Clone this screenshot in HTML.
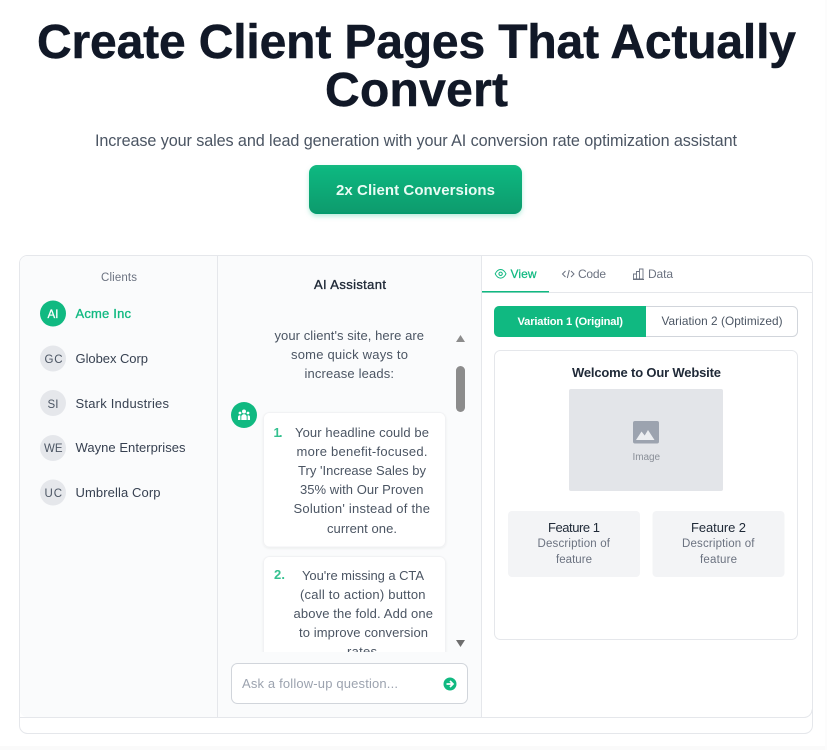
<!DOCTYPE html>
<html lang="en">
<head>
<meta charset="utf-8">
<title>Create Client Pages That Actually Convert</title>
<style>
html,body{margin:0;padding:0;background:#fff;width:827px;height:750px;overflow:hidden}
svg{display:block;position:absolute;left:0;top:0}
text{font-family:"Liberation Sans",Arial,sans-serif}
</style>
</head>
<body>
<svg width="827" height="750" viewBox="0 0 827 750" xmlns="http://www.w3.org/2000/svg">
<defs>
<linearGradient id="btn" x1="0" y1="0" x2="0" y2="1"><stop offset="0" stop-color="#12b981"/><stop offset="1" stop-color="#069a6c"/></linearGradient>
<filter id="sh" x="-20%" y="-30%" width="140%" height="170%"><feDropShadow dx="0" dy="2.5" stdDeviation="2.5" flood-color="#10b981" flood-opacity=".28"/></filter>
<filter id="cs" x="-5%" y="-5%" width="110%" height="110%"><feDropShadow dx="0" dy="1" stdDeviation="1" flood-color="#000" flood-opacity=".06"/></filter>
<clipPath id="chat"><rect x="225" y="320" width="250" height="332"/></clipPath>
<clipPath id="panel"><rect x="20" y="256" width="792" height="461" rx="7"/></clipPath>
</defs>

<!-- faint page edge -->
<rect x="0" y="746" width="827" height="4" fill="#fafafa"/>
<rect x="825" y="0" width="2" height="750" fill="#fcfcfc"/>

<!-- hero -->
<g font-weight="700" font-size="48" fill="#111827" stroke="#111827" stroke-width=".5">
<text x="37" y="58" textLength="759" lengthAdjust="spacing">Create Client Pages That Actually</text>
<text x="325" y="106" textLength="183" lengthAdjust="spacing">Convert</text>
</g>
<text x="95" y="146" font-size="16.2" fill="#4b5563" textLength="642" lengthAdjust="spacing">Increase your sales and lead generation with your AI conversion rate optimization assistant</text>
<rect x="309" y="165" width="213" height="49" rx="8" fill="url(#btn)" filter="url(#sh)"/>
<text x="336" y="195" font-size="15" font-weight="700" fill="#e9fbf4" textLength="159" lengthAdjust="spacing">2x Client Conversions</text>

<!-- panel frame -->
<rect x="19.5" y="255.5" width="793" height="478" rx="8" fill="#fff" stroke="#e5e7eb"/>
<g clip-path="url(#panel)">
<rect x="20" y="256" width="198" height="461" fill="#fafbfc"/>
<rect x="218" y="256" width="264" height="461" fill="#fafbfc"/>
<rect x="217" y="256" width="1" height="461" fill="#e5e7eb"/>
<rect x="481" y="256" width="1" height="461" fill="#e5e7eb"/>
</g>
<path d="M20 717.5H804a8 8 0 0 0 8-8" fill="none" stroke="#e5e7eb"/>

<!-- clients -->
<text x="101" y="281" font-size="11.5" fill="#6b7280" textLength="36" lengthAdjust="spacing">Clients</text>
<circle cx="53" cy="313.5" r="13" fill="#10b981"/>
<circle cx="53" cy="358.5" r="13" fill="#e5e7eb"/>
<circle cx="53" cy="403" r="13" fill="#e5e7eb"/>
<circle cx="53" cy="448" r="13" fill="#e5e7eb"/>
<circle cx="53" cy="492.5" r="13" fill="#e5e7eb"/>
<g font-size="11.5" fill="#4b5563">
<text x="47.5" y="318" fill="#fff" stroke="#fff" stroke-width=".3" textLength="11" lengthAdjust="spacing">AI</text>
<text x="44.5" y="363" textLength="18" lengthAdjust="spacing">GC</text>
<text x="47.5" y="408" textLength="11" lengthAdjust="spacing">SI</text>
<text x="44" y="452" textLength="18.5" lengthAdjust="spacing">WE</text>
<text x="44.5" y="497" textLength="17.5" lengthAdjust="spacing">UC</text>
</g>
<g font-size="13" fill="#374151">
<text x="75.5" y="318" fill="#10b981" stroke="#10b981" stroke-width=".3" textLength="55.5" lengthAdjust="spacing">Acme Inc</text>
<text x="75.5" y="363" textLength="72.5" lengthAdjust="spacing">Globex Corp</text>
<text x="75.5" y="408" textLength="93.5" lengthAdjust="spacing">Stark Industries</text>
<text x="75.5" y="452" textLength="110" lengthAdjust="spacing">Wayne Enterprises</text>
<text x="75.5" y="497" textLength="85" lengthAdjust="spacing">Umbrella Corp</text>
</g>

<!-- chat -->
<text x="314" y="289" font-size="13" fill="#1f2937" stroke="#1f2937" stroke-width=".35" textLength="72" lengthAdjust="spacing">AI Assistant</text>
<g clip-path="url(#chat)">
<g font-size="13" fill="#4b5563">
<text x="274.5" y="340" textLength="149.5" lengthAdjust="spacing">your client's site, here are</text>
<text x="291" y="359" textLength="117" lengthAdjust="spacing">some quick ways to</text>
<text x="304.5" y="378" textLength="89.5" lengthAdjust="spacing">increase leads:</text>
</g>
<rect x="263.5" y="412.5" width="182" height="134.5" rx="6" fill="#fff" stroke="#f1f2f4" filter="url(#cs)"/>
<rect x="263.5" y="556.5" width="182" height="130" rx="6" fill="#fff" stroke="#f1f2f4" filter="url(#cs)"/>
<g font-size="13" fill="#4b5563">
<text x="273.5" y="437" font-size="12.5" fill="#34c08f" font-weight="700" textLength="9" lengthAdjust="spacing">1.</text>
<text x="295" y="437" textLength="134" lengthAdjust="spacing">Your headline could be</text>
<text x="296.5" y="456" textLength="131" lengthAdjust="spacing">more benefit-focused.</text>
<text x="298" y="475" textLength="128" lengthAdjust="spacing">Try 'Increase Sales by</text>
<text x="300" y="494" textLength="123.5" lengthAdjust="spacing">35% with Our Proven</text>
<text x="293.5" y="513" textLength="136.5" lengthAdjust="spacing">Solution' instead of the</text>
<text x="327" y="533" textLength="70" lengthAdjust="spacing">current one.</text>
<text x="274" y="579" fill="#34c08f" font-weight="700" textLength="11" lengthAdjust="spacing">2.</text>
<text x="302" y="580" textLength="122" lengthAdjust="spacing">You're missing a CTA</text>
<text x="300" y="599" textLength="125.5" lengthAdjust="spacing">(call to action) button</text>
<text x="293.5" y="618" textLength="139.5" lengthAdjust="spacing">above the fold. Add one</text>
<text x="299" y="637" textLength="129" lengthAdjust="spacing">to improve conversion</text>
<text x="347" y="656" textLength="30" lengthAdjust="spacing">rates</text>
</g>
</g>
<circle cx="244" cy="415" r="13" fill="#10b981"/>
<g fill="#fff">
<circle cx="244" cy="411.5" r="2"/><circle cx="240" cy="413" r="1.4"/><circle cx="248" cy="413" r="1.4"/>
<path d="M241.3 420v-3.2a2.7 2.7 0 0 1 5.4 0V420z"/>
<path d="M238 420v-2.8a2 2 0 0 1 2-2l.4.4v4.4z"/>
<path d="M250 420v-2.8a2 2 0 0 0-2-2l-.4.4v4.4z"/>
</g>
<!-- scrollbar -->
<path d="M460.5 335l4.5 7h-9z" fill="#8c8c8c"/>
<rect x="456" y="366" width="9" height="46" rx="4.5" fill="#8c8c8c"/>
<path d="M456 640h9l-4.5 7z" fill="#6e6e6e"/>
<!-- input -->
<rect x="231.5" y="663.5" width="236" height="40" rx="6" fill="#fff" stroke="#d1d5db"/>
<text x="242" y="688" font-size="13" fill="#9ca3af" textLength="156" lengthAdjust="spacing">Ask a follow-up question...</text>
<circle cx="450" cy="684" r="6.5" fill="#10b981"/>
<path d="M446.5 684h6M450 681l3 3-3 3" fill="none" stroke="#fff" stroke-width="1.7"/>

<!-- tabs -->
<rect x="482" y="292" width="330" height="1" fill="#e5e7eb"/>
<rect x="482" y="291" width="67" height="1.5" fill="#10b981"/>
<g fill="none" stroke="#10b981" stroke-width="1">
<path d="M495.2 273.8c1.5-3 3.5-4.3 5.4-4.3s3.9 1.3 5.400 4.300c-1.500 3-3.500 4.300-5.400 4.300s-3.900-1.300-5.400-4.300z"/>
<circle cx="500.6" cy="273.800" r="1.700"/>
</g>
<text x="510.5" y="278" font-size="12" fill="#10b981" stroke="#10b981" stroke-width=".25" textLength="26" lengthAdjust="spacing">View</text>
<path d="M565.500 271l-3 3 3 3M571 271l3 3-3 3M569.300 270l-2 8" fill="none" stroke="#6b7280" stroke-width="1"/>
<text x="578" y="278" font-size="12" fill="#6b7280" textLength="28" lengthAdjust="spacing">Code</text>
<path d="M633.500 279v-5h3v5zM636.500 279v-7.500h3v7.500zM639.500 279v-10h3.500v10zM633 279.500h11" fill="none" stroke="#6b7280" stroke-width=".9"/>
<text x="648" y="278" font-size="12" fill="#6b7280" textLength="25" lengthAdjust="spacing">Data</text>

<!-- variation toggle -->
<rect x="494.500" y="306.500" width="303" height="30" rx="5" fill="#fff" stroke="#d1d5db"/>
<path d="M499 306h147v31H499a5 5 0 0 1-5-5v-21a5 5 0 0 1 5-5z" fill="#10b981"/>
<text x="517.500" y="325" font-size="11.200" font-weight="700" fill="#fff" textLength="105.500" lengthAdjust="spacing">Variation 1 (Original)</text>
<text x="661.500" y="325" font-size="11.800" fill="#4b5563" textLength="121" lengthAdjust="spacing">Variation 2 (Optimized)</text>

<!-- preview -->
<rect x="494.500" y="350.500" width="303" height="289" rx="6" fill="#fff" stroke="#e5e7eb"/>
<text x="572" y="377" font-size="13" font-weight="700" fill="#1f2937" textLength="149" lengthAdjust="spacing">Welcome to Our Website</text>
<rect x="569" y="389" width="154" height="102" rx="2" fill="#e3e5e9"/>
<rect x="633" y="421" width="26" height="22.500" rx="2" fill="#9ca3af"/>
<path d="M636 440l5.500-8.500 3.200 4 3.300-5.500 6.500 10z" fill="#eceef1"/>
<text x="632.500" y="460" font-size="10" fill="#8a8f98" textLength="27.500" lengthAdjust="spacing">Image</text>
<rect x="508" y="511" width="132" height="66" rx="4" fill="#f3f4f6"/>
<rect x="652.500" y="511" width="132" height="66" rx="4" fill="#f3f4f6"/>
<g font-size="13" fill="#1f2937">
<text x="548" y="532" textLength="52" lengthAdjust="spacing">Feature 1</text>
<text x="691" y="532" textLength="55" lengthAdjust="spacing">Feature 2</text>
</g>
<g font-size="11.500" fill="#6b7280">
<text x="537.500" y="547" textLength="72.500" lengthAdjust="spacing">Description of</text>
<text x="556" y="563" textLength="36" lengthAdjust="spacing">feature</text>
<text x="682" y="547" textLength="72.500" lengthAdjust="spacing">Description of</text>
<text x="700" y="563" textLength="37" lengthAdjust="spacing">feature</text>
</g>
</svg>
</body>
</html>
